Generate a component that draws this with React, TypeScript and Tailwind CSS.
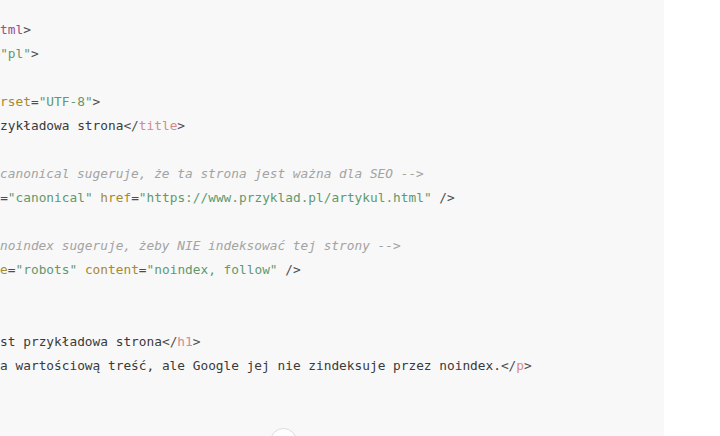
import React from 'react';

type Tok = [string, string];

const P = 'text-[#4d4d4d]';
const T = 'text-[#d48a8c]';
const A = 'text-[#a8892c]';
const V = 'text-[#5f9a6c]';
const X = 'text-[#3a3a3a]';
const D = 'text-[#9a4f88]';
const CM = 'text-[#a3a3a3] italic';

const lines: Tok[][] = [
  [[P, '<!'], [D, 'DOCTYPE html'], [P, '>']],
  [[P, '<'], [T, 'html'], [X, ' '], [A, 'lang'], [P, '='], [V, '"pl"'], [P, '>']],
  [[P, '<'], [T, 'head'], [P, '>']],
  [[X, '  '], [P, '<'], [T, 'meta'], [X, ' '], [A, 'charset'], [P, '='], [V, '"UTF-8"'], [P, '>']],
  [[X, '  '], [P, '<'], [T, 'title'], [P, '>'], [X, 'Przykładowa strona'], [P, '</'], [T, 'title'], [P, '>']],
  [],
  [[X, '  '], [CM, '<!-- Tag canonical sugeruje, że ta strona jest ważna dla SEO -->']],
  [
    [X, '  '], [P, '<'], [T, 'link'], [X, ' '], [A, 'rel'], [P, '='], [V, '"canonical"'], [X, ' '],
    [A, 'href'], [P, '='], [V, '"https://www.przyklad.pl/artykul.html"'], [X, ' '], [P, '/>'],
  ],
  [],
  [[X, '  '], [CM, '<!-- Tag noindex sugeruje, żeby NIE indeksować tej strony -->']],
  [
    [X, '  '], [P, '<'], [T, 'meta'], [X, ' '], [A, 'name'], [P, '='], [V, '"robots"'], [X, ' '],
    [A, 'content'], [P, '='], [V, '"noindex, follow"'], [X, ' '], [P, '/>'],
  ],
  [[P, '</'], [T, 'head'], [P, '>']],
  [[P, '<'], [T, 'body'], [P, '>']],
  [[X, '  '], [P, '<'], [T, 'h1'], [P, '>'], [X, 'To jest przykładowa strona'], [P, '</'], [T, 'h1'], [P, '>']],
  [
    [X, '  '], [P, '<'], [T, 'p'], [P, '>'],
    [X, 'Zawiera wartościową treść, ale Google jej nie zindeksuje przez noindex.'],
    [P, '</'], [T, 'p'], [P, '>'],
  ],
  [[P, '</'], [T, 'body'], [P, '>']],
  [[P, '</'], [T, 'html'], [P, '>']],
];

export default function App() {
  return (
    <div className="relative flex h-[436px] w-[720px] overflow-hidden bg-white">
      <div className="w-[664px] shrink-0 overflow-hidden bg-[#f8f8f8] pt-[18px]">
        <pre
          className="-ml-[84.7px] text-[12.8px] leading-[24px]"
          style={{ fontFamily: '"DejaVu Sans Mono", "Liberation Mono", monospace' }}
        >
          {lines.map((line, i) => (
            <div key={i} className="h-[24px] whitespace-pre">
              {line.map(([cls, text], j) => (
                <span key={j} className={cls}>
                  {text}
                </span>
              ))}
            </div>
          ))}
        </pre>
      </div>
      <div className="flex-1 bg-white" />
      <div className="absolute left-[270px] top-[428px] h-[27px] w-[27px] rounded-full border border-[#dcdcdc] bg-white" />
    </div>
  );
}
